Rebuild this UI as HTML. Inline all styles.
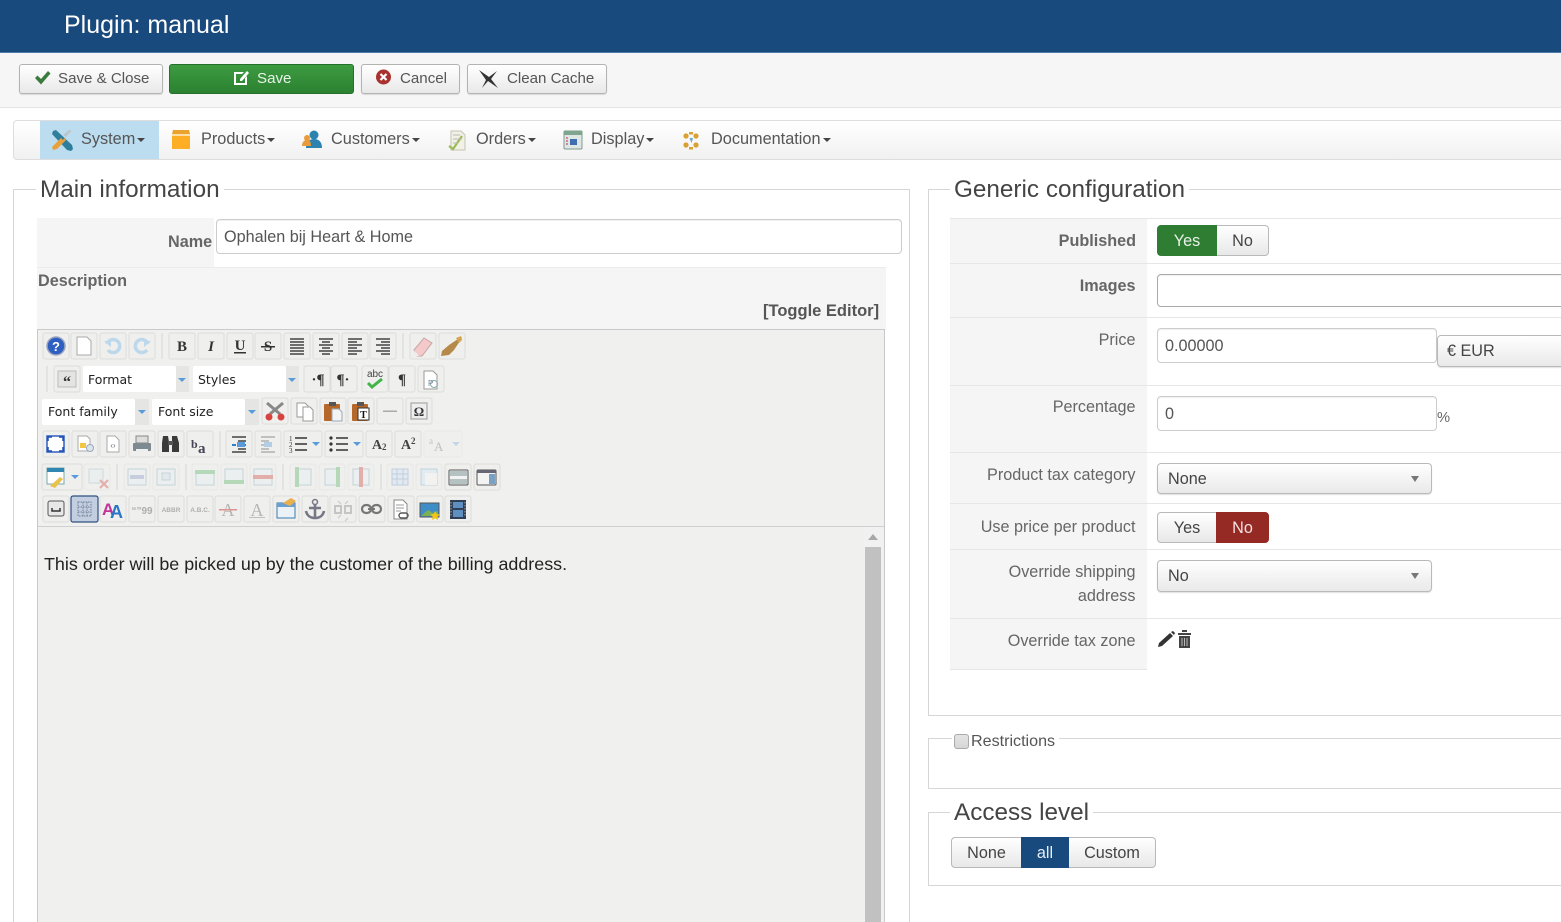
<!DOCTYPE html>
<html lang="en"><head><meta charset="utf-8"><title>Plugin: manual</title>
<style>
html,body{margin:0;padding:0;background:#fff;width:1561px;height:922px;overflow:hidden}
body{position:relative;font-family:"Liberation Sans",Arial,sans-serif;color:#555}
#w{position:absolute;left:0;top:0;width:1561px;height:922px;overflow:hidden;filter:blur(.35px)}
.a{position:absolute;box-sizing:border-box}
.t{position:absolute;white-space:nowrap;line-height:20px;height:20px}
.btn{position:absolute;box-sizing:border-box;height:30px;border:1px solid #b3b3b3;border-radius:3px;background:linear-gradient(#fff,#e8e8e8);box-shadow:0 1px 1px rgba(0,0,0,.12)}
.fs{position:absolute;box-sizing:border-box;border:1px solid #d6d6d6;}
.leg{position:absolute;background:#fff;white-space:nowrap;font-size:24.3px;line-height:30px;height:30px;color:#444;padding:0 4px 0 4px}
.lab{position:absolute;left:950px;width:185.5px;text-align:right;font-size:16.2px;line-height:20px;height:20px;color:#666;white-space:nowrap}
.inp{position:absolute;box-sizing:border-box;background:#fff;border:1px solid #ccc;border-radius:4px;font-size:16.2px;color:#555;padding-left:7px;box-shadow:inset 0 1px 1px rgba(0,0,0,.06)}
.sel{position:absolute;box-sizing:border-box;border:1px solid #b9b9b9;border-radius:4px;background:linear-gradient(#fff,#e9e9e9);font-size:16.2px;color:#444;padding-left:10px;box-shadow:0 1px 1px rgba(0,0,0,.12)}
.sel i{position:absolute;right:12px;top:12px;border-left:4px solid transparent;border-right:4px solid transparent;border-top:6px solid #777}
.line{position:absolute;height:1px;background:#e6e6e6;left:950px;right:0}
.nav{position:absolute;top:129px;font-size:16.3px;line-height:20px;height:20px;color:#555;white-space:nowrap}
.nav i{display:inline-block;vertical-align:2px;margin-left:2px;border-left:4.5px solid transparent;border-right:4.5px solid transparent;border-top:4.5px solid #444}
.seg{position:absolute;box-sizing:border-box;height:31px;text-align:center;font-size:16.2px;line-height:30px;color:#444;background:linear-gradient(#fff,#e8e8e8);border:1px solid #b9b9b9}
</style></head><body><div id="w">

<div class="a" style="left:0;top:0;width:1561px;height:53px;background:#194a7e;border-bottom:1px solid #4d7aa6"></div>
<div class="t" style="left:64px;top:10px;height:30px;line-height:30px;font-size:25px;color:#fff">Plugin: manual</div>

<div class="a" style="left:0;top:53px;width:1561px;height:55px;background:#f6f6f6;border-bottom:1px solid #e4e4e4"></div>
<div class="btn" style="left:19px;top:64px;width:144px"></div>
<div class="a" style="left:169px;top:64px;width:185px;height:30px;border-radius:3px;background:linear-gradient(#3d9b41,#2b8130);border:1px solid #25702a"></div>
<div class="btn" style="left:361px;top:64px;width:99px"></div>
<div class="btn" style="left:467px;top:64px;width:140px"></div>
<svg class="a" style="left:0;top:60px" width="620" height="40" viewBox="0 60 620 40">
<path d="M35 78l2.500-2.500 3.500 3.500 7-8 2.500 2.500-9.500 11z" fill="#3a7a3c"/>
<path d="M234 72h10l-2 2h-6v9h9v-5l2-2v9h-13z" fill="#fff"/><path d="M240 79l7-8 2 2-7 8h-2z" fill="#fff"/>
<circle cx="383.500" cy="77" r="7.500" fill="#a8322f"/><path d="M380.500 74l6 6m0-6l-6 6" stroke="#fff" stroke-width="2.200"/>
<path d="M479 70l10 7 8-6-6 8 7 9-10-7-6 7 4-8z" fill="#333"/>
</svg>
<div class="t" style="left:58px;top:69px;font-size:15.1px;color:#555">Save &amp; Close</div>
<div class="t" style="left:257px;top:69px;font-size:15.1px;color:#e9f3e9">Save</div>
<div class="t" style="left:400px;top:69px;font-size:15.1px;color:#555">Cancel</div>
<div class="t" style="left:507px;top:69px;font-size:15.1px;color:#555">Clean Cache</div>

<div class="a" style="left:13px;top:120px;width:1560px;height:40px;border:1px solid #ddd;border-radius:4px;background:linear-gradient(#fff,#f1f1f1)"></div>
<div class="a" style="left:40px;top:121px;width:119px;height:38px;background:#bcdcf0"></div>
<svg class="a" style="left:0;top:120px" width="860" height="40" viewBox="0 120 860 40">
<path d="M53 131l3-1 16 15 1 4-2 2-4-1-15-16z" fill="#2d7f9c"/><path d="M70 130l1 1-7 7 2 2-9 9-4 1-1-3 9-9 2 2z" fill="#e8a13c"/><path d="M63 135l6-5 2 1-5 6z" fill="#b9c6cc"/>
<path d="M173 130h16l1 4H172z" fill="#e9a32e"/><rect x="172" y="134" width="18" height="15" fill="#fdae24"/><rect x="172" y="134" width="18" height="2" fill="#fff" opacity=".6"/>
<circle cx="314" cy="135" r="4.500" fill="#2c83b0"/><path d="M306 148c0-6 3-9 8-9s8 3 8 9z" fill="#2c83b0"/><circle cx="307" cy="138" r="3" fill="#e99a3a"/><path d="M302 146c0-4 2-6 5-6s4 2 4 6z" fill="#e99a3a"/>
<path d="M451 131h10l4 4v15h-14z" fill="#f1f1e6" stroke="#c5c5b4"/><path d="M449 146l4 3 9-13" stroke="#9cba55" stroke-width="2.200" fill="none"/><path d="M453 135h7M453 139h9M453 143h5" stroke="#bbb"/>
<rect x="564" y="131" width="18" height="18" rx="1" fill="#dfe7e4" stroke="#7e9a8e"/><rect x="564" y="131" width="18" height="4" fill="#7fa58f"/><rect x="570" y="139" width="7" height="6" fill="#3f6fb0"/><path d="M566 138h2M566 141h2M566 144h2" stroke="#c25"/>
<g fill="#d9a032"><circle cx="686" cy="136" r="2.600"/><circle cx="696" cy="136" r="2.600"/><circle cx="686" cy="145" r="2.600"/><circle cx="696" cy="145" r="2.600"/><rect x="689" y="132" width="4" height="2.500"/><rect x="689" y="147" width="4" height="2.500"/></g><path d="M689.500 138h3.500l-1.500 5z" fill="#6ea6cc"/>
</svg>
<div class="nav" style="left:81px">System<i></i></div>
<div class="nav" style="left:201px">Products<i></i></div>
<div class="nav" style="left:331px">Customers<i></i></div>
<div class="nav" style="left:476px">Orders<i></i></div>
<div class="nav" style="left:591px">Display<i></i></div>
<div class="nav" style="left:711px">Documentation<i></i></div>

<!-- Main fieldset -->
<div class="fs" style="left:13px;top:189px;width:897px;height:760px"></div>
<div class="leg" style="left:36px;top:175px">Main information</div>
<div class="a" style="left:37px;top:218px;width:177px;height:49px;background:#f5f5f5"></div>
<div class="t" style="left:168px;top:232px;font-size:16.2px;font-weight:bold;color:#666">Name</div>
<div class="inp" style="left:216px;top:219px;width:686px;height:35px;line-height:35px">Ophalen bij Heart &amp; Home</div>
<div class="a" style="left:37px;top:267px;width:849px;height:63px;background:#f5f5f5;border-top:1px solid #ececec"></div>
<div class="t" style="left:38px;top:271px;font-size:16.2px;font-weight:bold;color:#666">Description</div>
<div class="t" style="left:763px;top:301px;font-size:16.5px;font-weight:bold;color:#555">[Toggle Editor]</div>

<!-- Editor -->
<div class="a" style="left:37px;top:329px;width:848px;height:600px;background:#f0f0ee;border:1px solid #c9c9c9"></div>
<div class="a" style="left:38px;top:526px;width:846px;height:1px;background:#cfcfcf"></div>
<div class="a" style="left:864px;top:527px;width:19px;height:400px;background:#f1f1f1"></div>
<div class="a" style="left:865px;top:547px;width:16px;height:380px;background:#c1c1c1"></div>
<div class="a" style="left:868px;top:534px;width:0;height:0;border-left:5px solid transparent;border-right:5px solid transparent;border-bottom:6px solid #a8a8a8"></div>
<div class="t" style="left:44px;top:554px;font-size:17.9px;color:#222">This order will be picked up by the customer of the billing address.</div>

<svg class="a" style="left:37px;top:329px" width="470" height="198" viewBox="37 329 470 198" font-family="Liberation Serif, serif">
<defs><rect id="b" x="-13" y="-13" width="26" height="26" rx="2" fill="#efefed" stroke="#dcdcda"/></defs>
<!-- row 1 -->
<g id="r1">
<use href="#b" x="56" y="346"/><use href="#b" x="84" y="346"/><use href="#b" x="113" y="346"/><use href="#b" x="142" y="346"/>
<use href="#b" x="182" y="346"/><use href="#b" x="211" y="346"/><use href="#b" x="240" y="346"/><use href="#b" x="268" y="346"/><use href="#b" x="297" y="346"/><use href="#b" x="326" y="346"/><use href="#b" x="355" y="346"/><use href="#b" x="383" y="346"/><use href="#b" x="423" y="346"/><use href="#b" x="452" y="346"/>
</g>
<circle cx="56" cy="346" r="9" fill="#2f5fc0" stroke="#9aa6c0" stroke-width="1.500"/><text x="56" y="351" text-anchor="middle" font-family="Liberation Sans" font-weight="bold" font-size="13" fill="#fff">?</text>
<path d="M77 337h10l4 4v14H77z" fill="#fff" stroke="#aaa"/>
<path d="M107 344a6.500 6.500 0 1 1 1 6" fill="none" stroke="#bcd8ea" stroke-width="3.500"/><path d="M104 341h7v6z" fill="#bcd8ea"/>
<path d="M148 344a6.500 6.500 0 1 0-1 6" fill="none" stroke="#bcd8ea" stroke-width="3.500"/><path d="M151 341h-7v6z" fill="#bcd8ea"/>
<line x1="162" y1="333" x2="162" y2="359" stroke="#d6d6d4"/>
<g fill="#333" font-size="15" text-anchor="middle">
<text x="182" y="351" font-weight="bold">B</text><text x="211" y="351" font-weight="bold" font-style="italic">I</text><text x="240" y="350" font-weight="bold">U</text><rect x="234" y="352" width="12" height="1.500"/><text x="268" y="351" font-weight="bold">S</text><rect x="261" y="346" width="14" height="1.500"/>
</g>
<path d="M290 339h14M290 342h14M290 345h14M290 348h14M290 351h14M290 354h14" stroke="#444" stroke-width="1.600"/>
<path d="M319 339h14M322 342h8M319 345h14M322 348h8M319 351h14M322 354h8" stroke="#444" stroke-width="1.600"/>
<path d="M348 339h14M348 342h9M348 345h14M348 348h9M348 351h14M348 354h9" stroke="#444" stroke-width="1.600"/>
<path d="M376 339h14M381 342h9M376 345h14M381 348h9M376 351h14M381 354h9" stroke="#444" stroke-width="1.600"/>
<line x1="403" y1="333" x2="403" y2="359" stroke="#d6d6d4"/>
<path d="M414 350l10-12 8 5-10 13h-5z" fill="#f3c9c9" stroke="#c9a5a5"/><path d="M414 350l5 6h-3z" fill="#eee"/>
<path d="M442 351l7-6 5 5-5 5-8 1zM449 345l12-8 1 1-8 12z" fill="#b5894a"/><path d="M456 338l5-2 1 4-3 3z" fill="#d2a64f"/>
<!-- row 2 -->
<line x1="47" y1="366" x2="47" y2="392" stroke="#d6d6d4"/>
<use href="#b" x="67" y="379"/><rect x="58" y="371" width="18" height="16" fill="#e4e4e2" stroke="#bbb"/><text x="67" y="387" text-anchor="middle" font-size="16" font-weight="bold" fill="#333">“</text>
<rect x="83" y="366" width="93" height="26" rx="2" fill="#fff"/><rect x="176" y="366" width="13" height="26" fill="#e5e5e3"/><path d="M178 378h8l-4 4z" fill="#5a9bdc"/>
<rect x="193" y="366" width="93" height="26" rx="2" fill="#fff"/><rect x="286" y="366" width="13" height="26" fill="#e5e5e3"/><path d="M288 378h8l-4 4z" fill="#5a9bdc"/>
<use href="#b" x="317" y="379"/><use href="#b" x="344" y="379"/><use href="#b" x="375" y="379"/><use href="#b" x="402" y="379"/><use href="#b" x="431" y="379"/>
<g font-size="15" font-weight="bold" fill="#333" text-anchor="middle"><text x="318" y="384">·¶</text><text x="343" y="384">¶·</text><text x="402" y="384">¶</text></g>
<text x="375" y="377" text-anchor="middle" font-size="10" fill="#444" font-family="Liberation Sans">abc</text><path d="M368 383l4 4 10-8" fill="none" stroke="#41b548" stroke-width="3"/>
<path d="M424 371h9l4 4v14h-13z" fill="#fff" stroke="#999"/><circle cx="434" cy="384" r="3.500" fill="none" stroke="#8aa"/><text x="428" y="386" font-size="8" fill="#789" font-family="Liberation Sans">P</text>
<!-- row 3 -->
<rect x="42" y="399" width="93" height="26" rx="2" fill="#fff"/><rect x="135" y="399" width="14" height="26" fill="#e5e5e3"/><path d="M138 410h8l-4 4z" fill="#5a9bdc"/>
<rect x="152" y="399" width="93" height="26" rx="2" fill="#fff"/><rect x="245" y="399" width="14" height="26" fill="#e5e5e3"/><path d="M248 410h8l-4 4z" fill="#5a9bdc"/>
<g font-family="DejaVu Sans, sans-serif" font-size="12.500" fill="#222"><text x="88" y="384">Format</text><text x="198" y="384">Styles</text><text x="48" y="416">Font family</text><text x="158" y="416">Font size</text></g>
<use href="#b" x="275" y="411"/><use href="#b" x="304" y="411"/><use href="#b" x="333" y="411"/><use href="#b" x="361" y="411"/><use href="#b" x="390" y="411"/><use href="#b" x="419" y="411"/>
<path d="M267 403l13 11M283 403l-13 11" stroke="#888" stroke-width="3"/><circle cx="269" cy="417" r="3.500" fill="#d8433f"/><circle cx="281" cy="417" r="3.500" fill="#d8433f"/>
<path d="M297 403h8l3 3v11h-11z" fill="#fff" stroke="#999"/><path d="M303 407h7l3 3v11h-10z" fill="#fff" stroke="#999"/>
<rect x="324" y="404" width="16" height="17" rx="1" fill="#b5682a"/><rect x="329" y="402" width="7" height="4" fill="#555"/><path d="M332 409h7l3 3v9h-10z" fill="#f4f4f4" stroke="#9ab"/>
<rect x="352" y="404" width="16" height="17" rx="1" fill="#b5682a"/><rect x="357" y="402" width="7" height="4" fill="#555"/><rect x="358" y="408" width="11" height="12" fill="#fff" stroke="#333"/><text x="363.500" y="418" text-anchor="middle" font-size="10" font-weight="bold" fill="#111">T</text>
<rect x="383" y="410.500" width="14" height="1.500" fill="#aaa"/>
<rect x="411" y="403" width="16" height="16" fill="#eee" stroke="#999"/><text x="419" y="416" text-anchor="middle" font-size="13" font-weight="bold" fill="#333">Ω</text>
<!-- row 4 -->
<use href="#b" x="56" y="444"/><use href="#b" x="85" y="444"/><use href="#b" x="113" y="444"/><use href="#b" x="142" y="444"/><use href="#b" x="171" y="444"/><use href="#b" x="200" y="444"/>
<rect x="47" y="436" width="17" height="16" fill="#fff" stroke="#2f5fc0" stroke-width="1.500"/><path d="M48 441v-4h4M59 437h4v4M63 447v4h-4M52 451h-4v-4" fill="none" stroke="#1f4fae" stroke-width="1.500"/>
<path d="M78 436h9l3 3v12H78z" fill="#fff" stroke="#aaa"/><rect x="80" y="443" width="6" height="5" fill="#f2c744"/><circle cx="90" cy="448" r="3.500" fill="#dbe5ec" stroke="#9ab"/>
<path d="M107 436h8l4 4v12h-12z" fill="#fff" stroke="#aaa"/><text x="113" y="448" text-anchor="middle" font-size="8" fill="#667" font-family="Liberation Sans">‹›</text>
<rect x="133" y="443" width="18" height="8" rx="1" fill="#7d8a91"/><rect x="136" y="436" width="12" height="7" fill="#ddd" stroke="#888"/><rect x="136" y="449" width="12" height="4" fill="#eee"/>
<path d="M163 436h5l1 6v10h-7v-9zM172 436h5l2 7v9h-7v-10z" fill="#3a3a3a"/><rect x="168" y="441" width="5" height="4" fill="#555"/>
<text x="191" y="448" font-size="12" font-weight="bold" fill="#445">b</text><text x="198" y="453" font-size="15" font-weight="bold" fill="#445">a</text>
<line x1="220" y1="431" x2="220" y2="457" stroke="#d6d6d4"/>
<use href="#b" x="239" y="444"/><use href="#b" x="268" y="444"/>
<path d="M232 437h14M238 441h8M238 445h8M238 449h8M232 452h14" stroke="#444" stroke-width="1.400"/><path d="M232 445h4" stroke="#2f7fd0" stroke-width="2"/><rect x="237" y="442" width="8" height="5" fill="#5a9bdc"/>
<g opacity=".4"><path d="M261 437h14M261 441h8M261 445h8M261 449h8M261 452h14" stroke="#555" stroke-width="1.400"/><rect x="264" y="442" width="8" height="5" fill="#5a9bdc"/></g>
<rect x="284" y="431" width="38" height="26" rx="2" fill="#efefed" stroke="#dcdcda"/><path d="M295 438h12M295 444h12M295 450h12" stroke="#333" stroke-width="1.600"/><text x="289" y="441" font-size="7" fill="#333">1</text><text x="289" y="447" font-size="7" fill="#333">2</text><text x="289" y="453" font-size="7" fill="#333">3</text><path d="M312 442h8l-4 4z" fill="#5a9bdc"/>
<rect x="325" y="431" width="38" height="26" rx="2" fill="#efefed" stroke="#dcdcda"/><path d="M336 438h12M336 444h12M336 450h12" stroke="#333" stroke-width="1.600"/><circle cx="331" cy="438" r="1.600" fill="#333"/><circle cx="331" cy="444" r="1.600" fill="#333"/><circle cx="331" cy="450" r="1.600" fill="#333"/><path d="M353 442h8l-4 4z" fill="#5a9bdc"/>
<use href="#b" x="379" y="444"/><use href="#b" x="408" y="444"/>
<text x="372" y="449" font-size="14" font-weight="bold" fill="#444">A</text><text x="382" y="450" font-size="9" font-weight="bold" fill="#444">2</text>
<text x="401" y="449" font-size="14" font-weight="bold" fill="#444">A</text><text x="411" y="444" font-size="9" font-weight="bold" fill="#444">2</text>
<g opacity=".3"><rect x="424" y="431" width="38" height="26" rx="2" fill="#efefed" stroke="#dcdcda"/><text x="429" y="444" font-size="9" fill="#555">a</text><text x="434" y="451" font-size="13" fill="#555">A</text><path d="M452 442h8l-4 4z" fill="#5a9bdc"/></g>
<!-- row 5 -->
<rect x="42" y="464" width="40" height="26" rx="2" fill="#efefed" stroke="#dcdcda"/>
<rect x="47" y="468" width="17" height="16" fill="#fff" stroke="#7aa"/><rect x="47" y="468" width="17" height="4" fill="#2f86b0"/><path d="M50 486l10-9 3 2-8 9z" fill="#e8c24d"/><path d="M71 475h8l-4 4z" fill="#5a9bdc"/>
<g opacity=".4">
<use href="#b" x="97" y="477"/><rect x="89" y="469" width="14" height="14" fill="#e4edf2" stroke="#9bb"/><path d="M100 480l8 8m0-8l-8 8" stroke="#d04a44" stroke-width="2"/>
<use href="#b" x="137" y="477"/><use href="#b" x="166" y="477"/><rect x="128" y="469" width="18" height="16" fill="#e6eef4" stroke="#8ab"/><rect x="130" y="475" width="14" height="4" fill="#8b9bc8"/><rect x="157" y="469" width="18" height="16" fill="#e6eef4" stroke="#8ab"/><rect x="162" y="473" width="8" height="7" fill="#cfe0ec" stroke="#8ab"/>
<use href="#b" x="205" y="477"/><use href="#b" x="234" y="477"/><use href="#b" x="263" y="477"/>
<rect x="196" y="472" width="18" height="13" fill="#e6eef4" stroke="#8ab"/><rect x="195" y="470" width="20" height="4" fill="#5db56a"/><rect x="225" y="469" width="18" height="13" fill="#e6eef4" stroke="#8ab"/><rect x="224" y="480" width="20" height="4" fill="#5db56a"/><rect x="254" y="469" width="18" height="16" fill="#e6eef4" stroke="#8ab"/><rect x="253" y="475" width="20" height="4" fill="#d04a44"/>
<use href="#b" x="303" y="477"/><use href="#b" x="332" y="477"/><use href="#b" x="361" y="477"/>
<rect x="296" y="469" width="15" height="16" fill="#e6eef4" stroke="#8ab"/><rect x="295" y="467" width="4" height="20" fill="#5db56a"/><rect x="325" y="469" width="13" height="16" fill="#e6eef4" stroke="#8ab"/><rect x="336" y="467" width="4" height="20" fill="#5db56a"/><rect x="353" y="469" width="16" height="16" fill="#e6eef4" stroke="#8ab"/><rect x="359" y="467" width="4" height="20" fill="#d04a44"/>
<use href="#b" x="400" y="477"/><use href="#b" x="429" y="477"/>
<rect x="392" y="469" width="16" height="16" fill="#cfdff3" stroke="#7a9cc8"/><path d="M392 474h16M392 479h16M397 469v16M403 469v16" stroke="#7a9cc8"/><rect x="421" y="469" width="16" height="16" fill="#cfe6f5" stroke="#7aa8c8"/><rect x="425" y="473" width="12" height="12" fill="#f5f5f5"/>
</g>
<line x1="117" y1="464" x2="117" y2="490" stroke="#d6d6d4"/><line x1="186" y1="464" x2="186" y2="490" stroke="#d6d6d4"/><line x1="283" y1="464" x2="283" y2="490" stroke="#d6d6d4"/><line x1="381" y1="464" x2="381" y2="490" stroke="#d6d6d4"/>
<use href="#b" x="458" y="477"/><use href="#b" x="487" y="477"/>
<rect x="449" y="470" width="19" height="15" rx="1" fill="#f3f3f3" stroke="#555"/><rect x="450" y="471" width="17" height="5" fill="#b5c2c2"/><rect x="450" y="479" width="17" height="5" fill="#b5c2c2"/>
<rect x="477" y="470" width="19" height="15" rx="1" fill="#f3f3f3" stroke="#555"/><rect x="477" y="470" width="19" height="3" fill="#667"/><rect x="489" y="474" width="6" height="10" fill="#7aa0c4"/>
<!-- row 6 -->
<use href="#b" x="56" y="509"/>
<rect x="71" y="496" width="27" height="26" rx="2" fill="#c3cfe0" stroke="#2f4f80" stroke-width="1.200"/>
<use href="#b" x="113" y="509"/><use href="#b" x="142" y="509"/><use href="#b" x="171" y="509"/><use href="#b" x="200" y="509"/><use href="#b" x="228" y="509"/><use href="#b" x="257" y="509"/><use href="#b" x="286" y="509"/><use href="#b" x="315" y="509"/><use href="#b" x="343" y="509"/><use href="#b" x="372" y="509"/><use href="#b" x="401" y="509"/><use href="#b" x="430" y="509"/><use href="#b" x="458" y="509"/>
<rect x="48" y="501" width="16" height="15" rx="2" fill="#e8e8e8" stroke="#555"/><path d="M52 508v3h8v-3" fill="none" stroke="#333" stroke-width="1.500"/>
<path d="M78 502h13v14H78zM78 507h13M78 512h13M83 502v14M87 502v14" fill="none" stroke="#6d7e96" stroke-dasharray="1.500 1"/>
<text x="102" y="515" font-size="17" font-weight="bold" fill="#c2349a" font-family="Liberation Sans">A</text><text x="110" y="518" font-size="18" font-weight="bold" fill="#2a76c7" font-family="Liberation Sans">A</text>
<g font-family="Liberation Sans" fill="#999" font-weight="bold" text-anchor="middle" opacity=".75"><text x="142" y="514" font-size="10">“”99</text><text x="171" y="512" font-size="6.500">ABBR</text><text x="200" y="512" font-size="6.500">A.B.C.</text></g>
<g opacity=".55"><text x="228" y="516" font-size="18" fill="#888" text-anchor="middle">A</text><rect x="219" y="509" width="18" height="1.500" fill="#d04a44"/><text x="257" y="516" font-size="18" fill="#888" text-anchor="middle">A</text><rect x="249" y="517" width="16" height="1" fill="#999"/></g>
<rect x="277" y="503" width="18" height="15" fill="#eaf2f8" stroke="#3a7bb0"/><rect x="277" y="503" width="18" height="4" fill="#6a9fcf"/><path d="M283 503l8-5 5 3-6 5z" fill="#e9b04d"/>
<circle cx="315" cy="502" r="2.500" fill="none" stroke="#778" stroke-width="1.500"/><path d="M315 504v14M309 508h12M306 511c1 5 5 7 9 7s8-2 9-7" fill="none" stroke="#778" stroke-width="2.600"/>
<g opacity=".4"><path d="M335 506h6v7h-6zM345 506h6v7h-6z" fill="none" stroke="#888" stroke-width="2"/><path d="M338 501l3 3M348 501l-3 3M338 518l3-3M348 518l-3 3" stroke="#888"/></g>
<rect x="362" y="505" width="9" height="8" rx="4" fill="none" stroke="#777" stroke-width="2.200"/><rect x="372" y="505" width="9" height="8" rx="4" fill="none" stroke="#777" stroke-width="2.200"/><rect x="368" y="508" width="7" height="2" fill="#777"/>
<path d="M394 500h9l4 4v15h-13z" fill="#fff" stroke="#888"/><path d="M396 505h8M396 508h8M396 511h5" stroke="#999"/><rect x="399" y="513" width="9" height="5" rx="2.500" fill="none" stroke="#555" stroke-width="1.400"/>
<rect x="420" y="503" width="19" height="14" fill="#3f8dc7" stroke="#555"/><path d="M421 516l7-6 5 3 5-2v5z" fill="#7eaf55"/><path d="M435 511l1.700 3 3.300.5-2.400 2.300.6 3.200-3.200-1.600-3 1.600.6-3.200-2.400-2.300 3.300-.5z" fill="#f0c419"/>
<rect x="450" y="500" width="16" height="19" fill="#2f3f55"/><rect x="453" y="502" width="10" height="6" fill="#5f8fc0"/><rect x="453" y="510" width="10" height="7" fill="#5f8fc0"/><path d="M451 502v15M465 502v15" stroke="#aaa" stroke-dasharray="1.500 1.500"/>
</svg>

<!-- Generic fieldset -->
<div class="fs" style="left:928px;top:189px;width:660px;height:527px"></div>
<div class="leg" style="left:950px;top:175px">Generic configuration</div>
<div class="a" style="left:950px;top:218px;width:197px;height:452px;background:#f5f5f5"></div>
<div class="line" style="top:218px"></div><div class="line" style="top:263px"></div><div class="line" style="top:317px"></div><div class="line" style="top:385px"></div><div class="line" style="top:452px"></div><div class="line" style="top:503px"></div><div class="line" style="top:549px"></div><div class="line" style="top:618px"></div>
<div class="a" style="left:950px;top:669px;width:197px;height:1px;background:#e6e6e6"></div>

<div class="lab" style="top:231px;font-weight:bold;width:186px">Published</div>
<div class="lab" style="top:276px;font-weight:bold">Images</div>
<div class="lab" style="top:330px">Price</div>
<div class="lab" style="top:397px">Percentage</div>
<div class="lab" style="top:465px">Product tax category</div>
<div class="lab" style="top:517px">Use price per product</div>
<div class="lab" style="top:562px">Override shipping</div>
<div class="lab" style="top:586px">address</div>
<div class="lab" style="top:631px">Override tax zone</div>

<div class="seg" style="left:1157px;top:225px;width:60px;background:#2e7d32;border-color:#2e7d32;color:#e8f2e8;border-radius:4px 0 0 4px">Yes</div>
<div class="seg" style="left:1217px;top:225px;width:52px;border-left:0;border-radius:0 4px 4px 0">No</div>
<div class="inp" style="left:1157px;top:274px;width:420px;height:33px;border-color:#a9a9a9"></div>
<div class="inp" style="left:1157px;top:328px;width:280px;height:35px;line-height:35px">0.00000</div>
<div class="sel" style="left:1437px;top:335px;width:140px;height:32px;line-height:31px;padding-left:9px">€ EUR</div>
<div class="inp" style="left:1157px;top:396px;width:280px;height:35px;line-height:35px">0</div>
<div class="t" style="left:1437px;top:408px;font-size:14.7px;color:#666">%</div>
<div class="sel" style="left:1157px;top:463px;width:275px;height:31px;line-height:30px">None<i></i></div>
<div class="seg" style="left:1157px;top:512px;width:59px;border-right:0;border-radius:4px 0 0 4px">Yes</div>
<div class="seg" style="left:1216px;top:512px;width:53px;background:#952a25;border-color:#952a25;color:#f3e3e3;border-radius:0 4px 4px 0">No</div>
<div class="sel" style="left:1157px;top:560px;width:275px;height:32px;line-height:31px">No<i></i></div>

<svg class="a" style="left:1155px;top:626px" width="40" height="26" viewBox="1155 626 40 26">
<path d="M1158 647l1-4 11-10 3 3-11 10z" fill="#333"/><path d="M1171 632l2-1 2 2-1 2z" fill="#333"/>
<path d="M1178 633h13v2h-13zM1182 630h5v2h-5z" fill="#444"/><path d="M1179 636h11v12h-11z" fill="#444"/><path d="M1182 638v8M1184.500 638v8M1187 638v8" stroke="#bbb" stroke-width="1"/>
</svg>

<!-- Restrictions -->
<div class="fs" style="left:928px;top:738px;width:660px;height:51px"></div>
<div class="a" style="left:952px;top:730px;width:107px;height:22px;background:#fff"></div>
<div class="a" style="left:954px;top:734px;width:15px;height:15px;border:1px solid #aaa;border-radius:3px;background:linear-gradient(#e4e4e4,#d6d6d6)"></div>
<div class="t" style="left:971px;top:731px;font-size:16.1px;color:#555">Restrictions</div>

<!-- Access -->
<div class="fs" style="left:928px;top:812px;width:660px;height:74px"></div>
<div class="leg" style="left:950px;top:798px">Access level</div>
<div class="seg" style="left:951px;top:837px;width:70px;border-right:0;border-radius:4px 0 0 4px">None</div>
<div class="seg" style="left:1021px;top:837px;width:48px;background:#194a7e;border-color:#194a7e;color:#e8eef5">all</div>
<div class="seg" style="left:1069px;top:837px;width:87px;border-left:0;border-radius:0 4px 4px 0">Custom</div>
</div></body></html>
